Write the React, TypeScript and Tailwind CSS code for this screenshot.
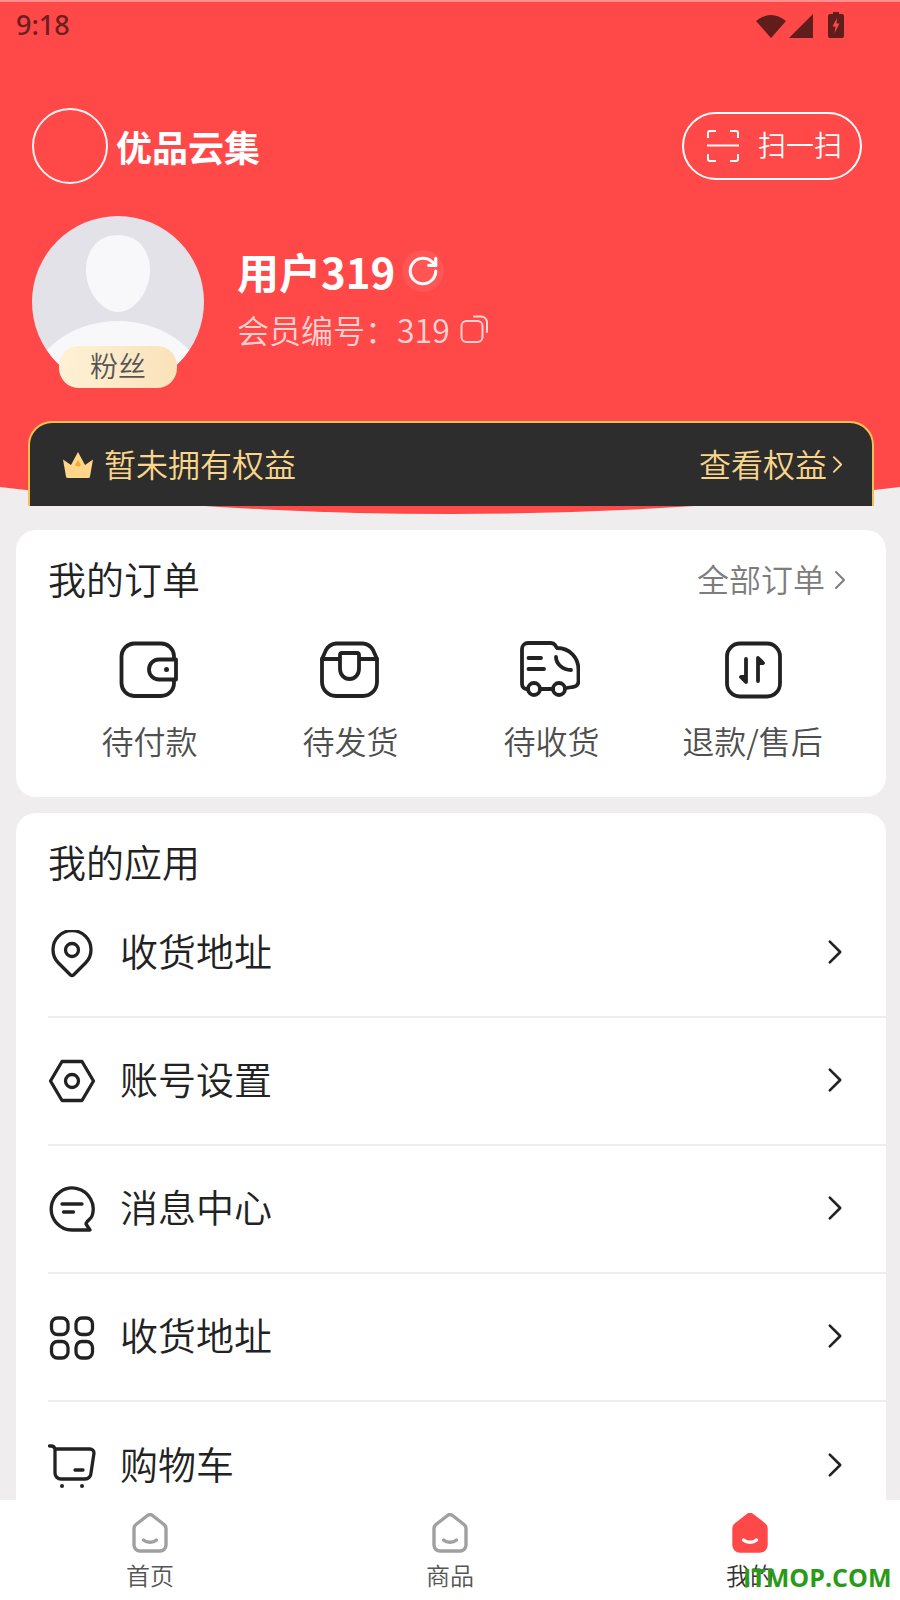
import React from "react";

const Chevron = ({ className }: { className: string }) => (
  <svg viewBox="0 0 12 20" fill="none" stroke="currentColor" strokeLinecap="round" strokeLinejoin="round" strokeWidth="2" className={className}>
    <path d="M2 2l8 8-8 8" />
  </svg>
);

const stroke = { fill: "none", stroke: "#222", strokeWidth: 3.8, strokeLinecap: "round", strokeLinejoin: "round" } as const;
const rowStroke = { ...stroke, strokeWidth: 3.3 };

const orders = [
  {
    label: "待付款",
    icon: (
      <svg viewBox="0 0 60 60" className="ml-[-4px] w-[60px] h-[60px]" {...stroke}>
        <path d="M56 18v-2A13 13 0 0 0 43 3.500H16A13 13 0 0 0 3.500 16v27A13 13 0 0 0 16 56h27a13 13 0 0 0 13-13v-3" />
        <path d="M58 19.500H41a10 10 0 0 0 0 20h17z" />
        <circle cx="48.500" cy="29.500" r="2.500" fill="#222" stroke="none" />
      </svg>
    ),
  },
  {
    label: "待发货",
    icon: (
      <svg viewBox="0 0 60 60" className="ml-[-4px] w-[60px] h-[60px]" {...stroke}>
        <path d="M3 19 7 10A13 13 0 0 1 17 3.500h27A13 13 0 0 1 54 10l4 9v23a14 14 0 0 1-14 14H17A14 14 0 0 1 3 42z" />
        <path d="M3 19h55" />
        <path d="M21 15a2 2 0 0 1 2-2h15a2 2 0 0 1 2 2v14a9.500 10 0 0 1-19 0z" fill="#fff" />
      </svg>
    ),
  },
  {
    label: "待收货",
    icon: (
      <svg viewBox="0 0 60 60" className="ml-[-4px] w-[60px] h-[60px]" {...stroke}>
        <path d="M8 49H7a5 5 0 0 1-5-5V9a6 6 0 0 1 6-6h23a5 5 0 0 1 4 2l2 3c13 0 21.500 10 21.500 22v10a6 6 0 0 1-6 7l-6 1" />
        <path d="M20 49h13" />
        <circle cx="14" cy="49" r="6" />
        <circle cx="39" cy="49" r="6" />
        <path d="M8.500 18H21M8.500 29H24M36 17c0 7 7 13 15 13" />
      </svg>
    ),
  },
  {
    label: "退款/售后",
    icon: (
      <svg viewBox="0 0 60 60" className="w-[60px] h-[60px]" {...stroke}>
        <rect x="4" y="3.500" width="53" height="53" rx="13" />
        <path d="M23 19v23l-5-5h5M35 41V18l5 5h-5" />
      </svg>
    ),
  },
];

const rows = [
  {
    label: "收货地址",
    icon: (
      <svg viewBox="0 0 48 48" className="w-[48px] h-[48px] mt-[2px]" {...rowStroke}>
        <path d="M22.500 45 10.500 33A19 19 0 1 1 37.500 33L25.500 45a2 2 0 0 1-3 0z" />
        <circle cx="24" cy="20" r="6.500" />
      </svg>
    ),
  },
  {
    label: "账号设置",
    icon: (
      <svg viewBox="0 0 48 48" className="w-[48px] h-[48px]" {...rowStroke}>
        <path d="M14 4.500h20L45.500 24 34 43.500H14L2.500 24z" />
        <circle cx="24" cy="24" r="6.500" />
      </svg>
    ),
  },
  {
    label: "消息中心",
    icon: (
      <svg viewBox="0 0 48 48" className="w-[48px] h-[48px]" {...rowStroke}>
        <path d="M24 45A21 21 0 1 1 44 31c-1 3-6 5-6 8l4 6z" />
        <path d="M14 19h20M15.500 27h10" />
      </svg>
    ),
  },
  {
    label: "收货地址",
    icon: (
      <svg viewBox="0 0 48 48" className="w-[48px] h-[48px]" {...rowStroke}>
        <rect x="3.500" y="5" width="16.500" height="16.500" rx="6" />
        <rect x="28" y="5" width="16.500" height="16.500" rx="6" />
        <rect x="3.500" y="28.500" width="16.500" height="16.500" rx="6" />
        <rect x="28" y="28.500" width="16.500" height="16.500" rx="6" />
      </svg>
    ),
  },
  {
    label: "购物车",
    icon: (
      <svg viewBox="0 0 48 48" className="w-[48px] h-[48px]" {...rowStroke}>
        <path d="M1.500 4H3a4 4 0 0 1 4 3h35a4 4 0 0 1 4 4l-3 20a6 6 0 0 1-6 6H13a6 6 0 0 1-6-6V7" />
        <path d="M27 28h8" />
        <circle cx="14" cy="44" r="2" fill="#222" stroke="none" />
        <circle cx="34" cy="44" r="2" fill="#222" stroke="none" />
      </svg>
    ),
  },
];

const Home = ({ active }: { active?: boolean }) => (
  <svg viewBox="0 0 36 40" className="w-[36px] h-[40px]">
    <path
      d="M15.500 2.500a4 4 0 0 1 5 0L32 11.500a5 5 0 0 1 2 4V32a6 6 0 0 1-6 6H8a6 6 0 0 1-6-6V15.500a5 5 0 0 1 2-4z"
      fill={active ? "#ff4848" : "none"}
      stroke={active ? "#ff4848" : "#a0a0a0"}
      strokeWidth="3.400"
    />
    <path d="M11.500 27c3.500 3 9.500 3 13 0" fill="none" stroke={active ? "#fff" : "#a0a0a0"} strokeWidth="3.400" strokeLinecap="round" />
  </svg>
);

export default function App() {
  return (
    <div className="relative w-[900px] h-[1600px] overflow-hidden flex flex-col bg-[#efeded] [font-family:'Noto_Sans_CJK_SC','Noto_Sans',sans-serif]">
      <div className="flex-1 min-h-0 overflow-hidden">
        <header className="h-[514px] bg-[#ff4848] [clip-path:circle(3750px_at_450px_-3236px)]">
          <div className="h-[2px] bg-[#ff8e8e]" />
          <div className="h-[48px] flex items-center justify-between pl-[16px] pr-[56px]">
            <span className="mt-[-4px] text-[27px] leading-none font-medium text-[#6b1f1f] [font-family:'Noto_Sans',sans-serif]">9:18</span>
            <div className="flex items-center">
              <svg viewBox="0 0 30 24" className="w-[30px] h-[24px] mt-[-1px]" fill="#611c1c"><path d="M0 7Q15-5 30 7L15 24z" /></svg>
              <svg viewBox="0 0 24 24" className="w-[24px] h-[24px] ml-[3px]" fill="#611c1c"><path d="M0 24 24 0v24z" /></svg>
              <svg viewBox="0 0 16 26" className="w-[16px] h-[26px] ml-[15px] mt-[-3px]">
                <path d="M5 0h6v2h3a2 2 0 0 1 2 2v20a2 2 0 0 1-2 2H2a2 2 0 0 1-2-2V4a2 2 0 0 1 2-2h3z" fill="#611c1c" />
                <path d="M9 6 4.500 14.500H7.500L6.500 21 11.500 11.500H8.500z" fill="#ff4848" />
              </svg>
            </div>
          </div>

          <div className="mt-[58px] h-[76px] flex items-center justify-between pl-[32px] pr-[38px]">
            <div className="flex items-center">
              <div className="w-[76px] h-[76px] rounded-full border-2 border-[#fdf3f3]" />
              <span className="ml-[8px] mt-[-1px] text-[36px] leading-none font-bold text-white">优品云集</span>
            </div>
            <div className="w-[180px] h-[68px] rounded-full border-2 border-white flex items-center pl-[23px]">
              <svg viewBox="0 0 32 32" className="w-[32px] h-[32px]" fill="none" stroke="#fff" strokeWidth="2">
                <path d="M1 8V3a2 2 0 0 1 2-2h6M23 1h6a2 2 0 0 1 2 2v5M1 24v5a2 2 0 0 0 2 2h6M23 31h6a2 2 0 0 0 2-2v-5M0 15.500h32" />
              </svg>
              <span className="ml-[19px] mt-[-4px] text-[28px] leading-none font-[350] text-white">扫一扫</span>
            </div>
          </div>

          <div className="mt-[32px] flex pl-[32px]">
            <div className="relative w-[172px] h-[172px]">
              <svg viewBox="0 0 172 172" className="w-[172px] h-[172px]">
                <defs>
                  <clipPath id="av"><circle cx="86" cy="86" r="86" /></clipPath>
                </defs>
                <g clipPath="url(#av)">
                  <rect width="172" height="172" fill="#e2e2e8" />
                  <path d="M86 19c20 0 32 15 32 35 0 22-16 42-32 42S54 76 54 54c0-20 12-35 32-35z" fill="#f8f8fb" />
                  <ellipse cx="86" cy="180" rx="90" ry="75" fill="#f8f8fb" />
                </g>
              </svg>
              <div className="absolute left-[27px] top-[130px] w-[118px] h-[42px] pb-[4px] rounded-[20px] bg-gradient-to-r from-[#fff1d6] to-[#fae2ba] flex items-center justify-center text-[28px] leading-none font-[350] text-[#555]">
                粉丝
              </div>
            </div>
            <div className="ml-[33px] pt-[27px]">
              <div className="flex items-center h-[56px]">
                <span className="text-[42px] leading-none font-bold text-white">用户319</span>
                <span className="ml-[7px] w-[42px] h-[42px] rounded-full bg-[#ff5555] flex items-center justify-center">
                  <svg viewBox="0 0 24 24" className="w-[34px] h-[34px]" fill="none" stroke="#fff" strokeWidth="2.200" strokeLinecap="round" strokeLinejoin="round">
                    <path d="M21 12a9 9 0 1 1-9-9c2.520 0 4.930 1 6.740 2.740L21 8" />
                    <path d="M21 3v5h-5" />
                  </svg>
                </span>
              </div>
              <div className="flex items-center mt-[8px] h-[44px]">
                <span className="text-[32px] leading-none font-[350] text-[#ffd3d3]">会员编号：319</span>
                <svg viewBox="0 0 28 28" className="ml-[10px] w-[28px] h-[28px]" fill="none" stroke="#ffd3d3" strokeWidth="2" strokeLinecap="round">
                  <rect x="1.500" y="6" width="21" height="21" rx="5" />
                  <path d="M14 1.500h7a6 6 0 0 1 6 6V17" />
                </svg>
              </div>
            </div>
          </div>
        </header>

        <div className="relative mt-[-93px] ml-[28px] mr-[26px] h-[85px] rounded-t-[24px] border-2 border-b-0 border-[#f2c050] bg-[#2d2d2d] flex items-center justify-between pl-[33px] pr-[29px] text-[32px] leading-none text-[#fad58a]">
          <div className="flex items-center">
            <svg viewBox="0 0 30 26" className="w-[30px] h-[26px]">
              <path d="M0 7.500 8 13 15 0 22 13 30 7.500 27 24.500Q27 26 25 26H5Q3 26 3 24.500z" fill="#ffd68a" />
              <path d="M15 8 18 13Q15 16 12 13z" fill="#eea93c" />
            </svg>
            <span className="ml-[11px] mt-[-4px] font-[350]">暂未拥有权益</span>
          </div>
          <div className="flex items-center">
            <span className="mt-[-4px] font-[350]">查看权益</span>
            <Chevron className="ml-[5px] w-[11px] h-[19px] text-[#fad58a]" />
          </div>
        </div>

        <section className="mt-[24px] ml-[16px] mr-[14px] h-[267px] rounded-[20px] bg-white pt-[28px]">
          <div className="flex items-center justify-between h-[44px] pl-[32px] pr-[40px]">
            <span className="mt-[-4px] text-[38px] leading-none font-[350] text-[#222]">我的订单</span>
            <div className="flex items-center text-[#7d7d7d]">
              <span className="mt-[-4px] text-[32px] leading-none font-[350]">全部订单</span>
              <Chevron className="ml-[9px] w-[12px] h-[22px]" />
            </div>
          </div>
          <div className="mt-[38px] grid grid-cols-4 px-[33px]">
            {orders.map((o) => (
              <div key={o.label} className="flex flex-col items-center">
                {o.icon}
                <span className="mt-[20px] text-[32px] leading-[40px] font-[350] text-[#4f4f4f]">{o.label}</span>
              </div>
            ))}
          </div>
        </section>

        <section className="mt-[16px] ml-[16px] mr-[14px] rounded-t-[20px] bg-white pt-[24px]">
          <div className="pl-[32px] text-[38px] leading-[48px] font-[350] text-[#222]">我的应用</div>
          <div className="mt-[5px]">
            {rows.map((r, i) => (
              <div key={i} className="ml-[32px] h-[128px] flex items-center border-b-2 border-[#eeeeee] last:border-b-0">
                <div className="w-[48px] flex justify-center">{r.icon}</div>
                <span className="ml-[24px] mt-[-7px] flex-1 text-[38px] leading-none font-[350] text-[#222]">{r.label}</span>
                <Chevron className="mr-[43px] mt-[-3px] w-[16px] h-[26px] text-[#222]" />
              </div>
            ))}
          </div>
        </section>
      </div>

      <nav className="h-[100px] bg-white grid grid-cols-3 shrink-0">
        {[
          { t: "首页", a: false },
          { t: "商品", a: false },
          { t: "我的", a: true },
        ].map((n) => (
          <div key={n.t} className="flex flex-col items-center pt-[13px]">
            <Home active={n.a} />
            <span className={`mt-[7px] text-[24px] leading-[30px] font-[350] ${n.a ? "text-[#333]" : "text-[#555]"}`}>{n.t}</span>
          </div>
        ))}
      </nav>

      <span className="absolute left-[743px] top-[1561px] text-[25px] leading-[32px] font-bold text-[#2a9a17] [font-family:'Open_Sans',sans-serif]">ITMOP.COM</span>
    </div>
  );
}
